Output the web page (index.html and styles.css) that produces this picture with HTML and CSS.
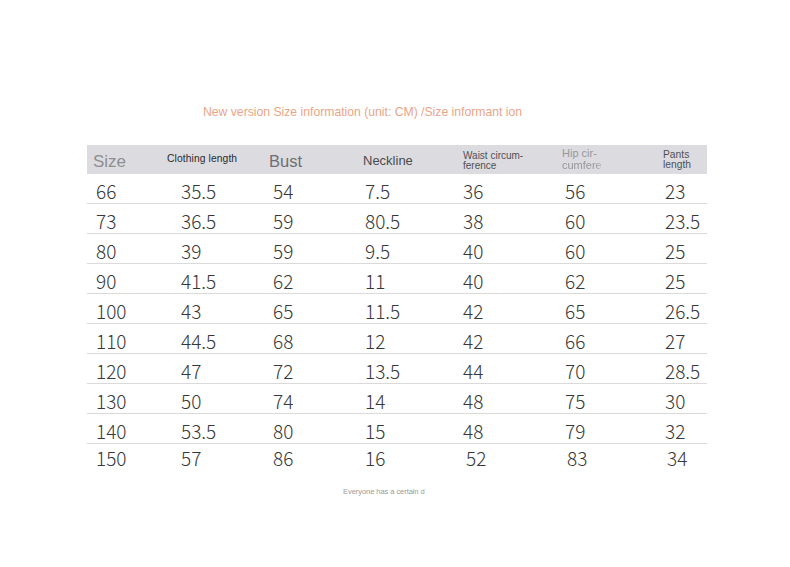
FILE: index.html
```html
<!DOCTYPE html>
<html lang="en">
<head>
<meta charset="utf-8">
<title>Size information</title>
<link rel="stylesheet" href="styles.css">
</head>
<body>
<main class="page">
  <h1 class="title">New version Size information (unit: CM) /Size informant ion</h1>
  <div class="table">
    <div class="row head">
      <div class="cell h-size">Size</div>
      <div class="cell h-small">Clothing length</div>
      <div class="cell h-bust">Bust</div>
      <div class="cell h-neck">Neckline</div>
      <div class="cell h-two">Waist circum-<br>ference</div>
      <div class="cell h-hip"><span>Hip cir-</span><span class="fade">cumfere</span></div>
      <div class="cell h-two h-pants">Pants<br>length</div>
    </div>
    <div class="row"><div class="cell">66</div><div class="cell">35.5</div><div class="cell">54</div><div class="cell">7.5</div><div class="cell">36</div><div class="cell">56</div><div class="cell">23</div></div>
    <div class="row"><div class="cell">73</div><div class="cell">36.5</div><div class="cell">59</div><div class="cell">80.5</div><div class="cell">38</div><div class="cell">60</div><div class="cell">23.5</div></div>
    <div class="row"><div class="cell">80</div><div class="cell">39</div><div class="cell">59</div><div class="cell">9.5</div><div class="cell">40</div><div class="cell">60</div><div class="cell">25</div></div>
    <div class="row"><div class="cell">90</div><div class="cell">41.5</div><div class="cell">62</div><div class="cell">11</div><div class="cell">40</div><div class="cell">62</div><div class="cell">25</div></div>
    <div class="row"><div class="cell">100</div><div class="cell">43</div><div class="cell">65</div><div class="cell">11.5</div><div class="cell">42</div><div class="cell">65</div><div class="cell">26.5</div></div>
    <div class="row"><div class="cell">110</div><div class="cell">44.5</div><div class="cell">68</div><div class="cell">12</div><div class="cell">42</div><div class="cell">66</div><div class="cell">27</div></div>
    <div class="row"><div class="cell">120</div><div class="cell">47</div><div class="cell">72</div><div class="cell">13.5</div><div class="cell">44</div><div class="cell">70</div><div class="cell">28.5</div></div>
    <div class="row"><div class="cell">130</div><div class="cell">50</div><div class="cell">74</div><div class="cell">14</div><div class="cell">48</div><div class="cell">75</div><div class="cell">30</div></div>
    <div class="row"><div class="cell">140</div><div class="cell">53.5</div><div class="cell">80</div><div class="cell">15</div><div class="cell">48</div><div class="cell">79</div><div class="cell">32</div></div>
    <div class="row last"><div class="cell">150</div><div class="cell">57</div><div class="cell">86</div><div class="cell">16</div><div class="cell">52</div><div class="cell">83</div><div class="cell">34</div></div>
  </div>
  <p class="footer">Everyone has a certain d</p>
</main>
</body>
</html>
```

FILE: styles.css
```css
html, body {
  margin: 0;
  padding: 0;
  background: #ffffff;
}

.page {
  padding: 105px 0 0 87px;
  font-family: "Liberation Sans", Arial, sans-serif;
}

.title {
  margin: 0 0 26px 116px;
  font-size: 12.2px;
  line-height: 14px;
  font-weight: normal;
  color: #eaa586;
  white-space: nowrap;
}

.table {
  width: 620px;
}

.row {
  display: grid;
  grid-template-columns: 73px 102px 94px 100px 99px 101px 51px;
  height: 30px;
  border-bottom: 1px solid #dadada;
  box-sizing: border-box;
}

.row.last {
  border-bottom: none;
  height: 28px;
}

.row .cell {
  font-family: "Noto Sans CJK SC", "Noto Sans", sans-serif;
  font-size: 19px;
  font-weight: 300;
  line-height: 26px;
  padding-top: 4px;
  color: #383838;
  white-space: nowrap;
}

.row .cell:nth-child(1) { padding-left: 9px; }
.row .cell:nth-child(2) { padding-left: 21px; }
.row .cell:nth-child(3) { padding-left: 11px; }
.row .cell:nth-child(4) { padding-left: 9px; }
.row .cell:nth-child(5) { padding-left: 7px; }
.row .cell:nth-child(6) { padding-left: 10px; }
.row .cell:nth-child(7) { padding-left: 9px; }

.row.last .cell { padding-top: 1px; }
.row.last .cell:nth-child(5) { padding-left: 10px; }
.row.last .cell:nth-child(6) { padding-left: 12px; }
.row.last .cell:nth-child(7) { padding-left: 11px; }

.row.head {
  height: 29px;
  background: #dcdce0;
  border-bottom: none;
}

.row.head .cell {
  font-family: "Liberation Sans", Arial, sans-serif;
  font-weight: normal;
  padding-top: 0;
  padding-left: 7px;
  display: flex;
  flex-direction: column;
  justify-content: center;
  line-height: 1;
}

.row.head .cell.h-size {
  padding-left: 6px;
  font-size: 17px;
  color: #8e8e92;
  padding-top: 3px;
}

.row.head .cell.h-small {
  font-size: 10.3px;
  color: #2a2a2c;
  letter-spacing: 0.1px;
}

.row.head .cell.h-bust {
  font-size: 16.5px;
  color: #6e6e72;
  padding-top: 3px;
}

.row.head .cell.h-neck {
  font-size: 13px;
  color: #4a4a4e;
  padding-top: 2px;
}

.row.head .cell.h-two {
  display: block;
  font-size: 10px;
  line-height: 10px;
  color: #505054;
  padding-top: 6px;
}

.row.head .cell.h-pants {
  line-height: 9.5px;
  padding-top: 5px;
  font-size: 10.3px;
}

.row.head .cell.h-hip {
  display: block;
  font-size: 11px;
  line-height: 12px;
  color: #97979c;
  padding-top: 2px;
}

.h-hip span {
  display: block;
}

.h-hip .fade {
  -webkit-mask-image: linear-gradient(to right, #000 0, #000 34px, transparent 44px);
  mask-image: linear-gradient(to right, #000 0, #000 34px, transparent 44px);
}

.footer {
  margin: 16px 0 0 256px;
  font-size: 7.6px;
  line-height: 8px;
  color: #9a9a9a;
  letter-spacing: -0.1px;
}
```
